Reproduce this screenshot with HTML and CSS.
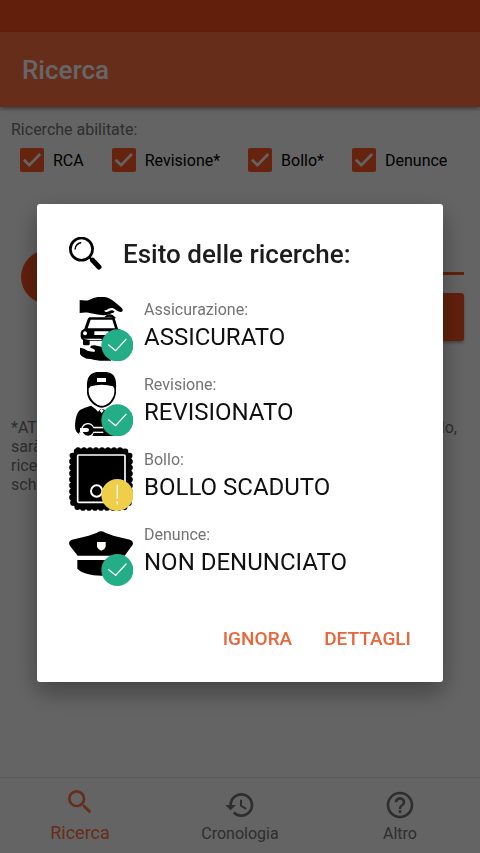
FILE: index.html
```html
<!DOCTYPE html>
<html lang="it">
<head>
<meta charset="utf-8">
<meta name="viewport" content="width=device-width, initial-scale=1">
<title>Ricerca</title>
<link rel="stylesheet" href="styles.css">
</head>
<body>
<div class="app">
  <div class="status-bar"></div>
  <header class="app-bar"><h1>Ricerca</h1></header>
  <main class="content">
    <fieldset class="filters">
      <legend>Ricerche abilitate:</legend>
      <div class="filter-row">
        <label><input type="checkbox" checked>RCA</label>
        <label><input type="checkbox" checked>Revisione*</label>
        <label><input type="checkbox" checked>Bollo*</label>
        <label><input type="checkbox" checked>Denunce</label>
      </div>
    </fieldset>
    <form class="search">
      <button type="button" class="round" aria-label="Scansiona"></button>
      <div class="search-fields">
        <input type="text" aria-label="Targa">
        <button type="button" class="submit" aria-label="Cerca"></button>
      </div>
    </form>
    <p class="note"><span class="full-line">*ATT. bollo,</span>
      sarà<br>
      ricerca<br>
      scheda</p>
  </main>
  <nav class="tabs">
    <a href="#ricerca" class="active">
      <svg viewBox="0 0 24 24"><path d="M15.5 14h-.79l-.28-.27A6.47 6.47 0 0 0 16 9.5 6.5 6.5 0 1 0 9.500 16c1.610 0 3.090-.59 4.230-1.570l.27.28v.79l5 4.990L20.490 19l-4.990-5zm-6 0C7.010 14 5 11.990 5 9.500S7.010 5 9.500 5 14 7.010 14 9.500 11.990 14 9.500 14z"/></svg>
      Ricerca</a>
    <a href="#cronologia">
      <svg viewBox="0 0 24 24"><path d="M13 3a9 9 0 0 0-9 9H1l3.890 3.890.07.14L9 12H6c0-3.870 3.130-7 7-7s7 3.130 7 7-3.130 7-7 7c-1.930 0-3.680-.79-4.940-2.060l-1.420 1.420A8.954 8.954 0 0 0 13 21a9 9 0 0 0 0-18zm-1 5v5l4.280 2.540.72-1.210-3.500-2.080V8H12z"/></svg>
      Cronologia</a>
    <a href="#altro">
      <svg viewBox="0 0 24 24"><path d="M11 18h2v-2h-2v2zm1-16C6.480 2 2 6.480 2 12s4.480 10 10 10 10-4.480 10-10S17.520 2 12 2zm0 18c-4.410 0-8-3.590-8-8s3.590-8 8-8 8 3.590 8 8-3.590 8-8 8zm0-14c-2.210 0-4 1.790-4 4h2c0-1.100.9-2 2-2s2 .9 2 2c0 2-3 1.750-3 5h2c0-2.250 3-2.500 3-5 0-2.210-1.790-4-4-4z"/></svg>
      Altro</a>
  </nav>
</div>

<div class="scrim">
  <section class="dialog" role="dialog" aria-modal="true" aria-labelledby="dialog-title">
    <header class="dialog-head">
      <svg viewBox="207 140 98 98">
        <circle cx="244" cy="176" r="33" fill="none" stroke="#000" stroke-width="8"/>
        <path d="M225 176Q227 160 242 157" fill="none" stroke="#000" stroke-width="4" stroke-linecap="round"/>
        <path d="M267 200l10 10" stroke="#000" stroke-width="7"/>
        <path d="M277 209l19 20" stroke="#000" stroke-width="15" stroke-linecap="round"/>
      </svg>
      <h2 id="dialog-title">Esito delle ricerche:</h2>
    </header>
    <dl class="results">
      <div class="result">
        <svg viewBox="27 22 192 192">
          <path d="M59 31C72 32 79 34 87 31C101 24 112 21 127 21C143 22 155 29 165 38L183 53C190 59 190 66 182 67C174 67 166 58 158 55C149 54 142 61 132 63L137 67C147 68 151 58 160 63C167 65 162 70 155 71C139 79 124 77 105 73C85 68 75 67 59 70Z"/>
          <path d="M88 83H159Q164 85 166 92L174 117Q188 120 188 132V145H177V165Q177 168 172 168H164Q160 168 160 164V153H89V163Q89 167 85 167H73Q69 167 69 163V151Q63 148 62 141V129Q63 121 73 117L82 91Q84 85 88 83ZM92 90L83 116H165L157 90Z" fill-rule="evenodd"/>
          <circle cx="75" cy="131" r="6" fill="#fff"/>
          <path d="M103 125H146V136H103ZM69 147H125V151H89Z" fill="#fff"/>
          <path d="M133 82Q143 70 158 76L168 85L162 88Q153 77 138 83Z"/>
          <path d="M60 174Q73 175 84 184L103 187Q108 180 99 177L91 174Q91 166 103 167L131 173L153 190V213H120C104 212 94 206 80 207Q64 201 60 193Z"/>
          <circle cx="172" cy="167" r="48" fill="#23ae88"/>
          <path d="M146 166l21 17 31-34" class="mark"/>
        </svg>
        <dt>Assicurazione:</dt><dd>ASSICURATO</dd>
      </div>
      <div class="result">
        <svg viewBox="27 18 192 192">
          <path d="M81 67C80 45 84 31 94 24Q108 16 126 17Q150 17 160 27C168 37 169 51 168 67V80C166 101 151 118 135 123Q125 127 115 123C98 116 82 99 81 80Z"/>
          <path d="M86 68L92 61Q125 51 159 61L163 68C166 91 151 111 134 118Q125 121 117 118C99 110 84 91 86 68Z" fill="#fff"/>
          <path d="M111 36H138V48H111Z" fill="#fff"/>
          <path d="M93 119Q106 127 114 137Q120 130 125 128Q134 130 140 136L157 119L181 130V210H70L57 204Q48 199 46 190C43 167 49 142 60 132Q73 124 93 119Z"/>
          <path d="M83 171A19 19 0 0 1 101 182H130V201H101L97 210H62L56 200L66 197L64 190A19 19 0 0 1 83 171Z" fill="#fff"/>
          <circle cx="84" cy="192" r="17"/>
          <path d="M95 187H135V197H95Z"/>
          <path d="M60 186H80Q87 186 87 192T80 198H60Z" fill="#fff"/>
          <path d="M119 134l6-6 6 6-6 7Z" fill="#fff"/>
          <circle cx="172" cy="163" r="48" fill="#23ae88"/>
          <path d="M146 162l21 17 31-34" class="mark"/>
        </svg>
        <dt>Revisione:</dt><dd>REVISIONATO</dd>
      </div>
      <div class="result">
        <svg viewBox="27 21 192 192">
          <path d="M54 30H192L210 48V186L192 204H54L36 186V48Z" stroke="#000" stroke-width="8"/>
          <path d="M54 30H192L210 48V186L192 204H54L36 186V48Z" fill="none" stroke="#000" stroke-width="17" stroke-linecap="round" stroke-dasharray="0 18"/>
          <rect x="53" y="45" width="142" height="142" rx="3" fill="none" stroke="#fff" stroke-width="5"/>
          <circle cx="110" cy="153" r="17" fill="none" stroke="#fff" stroke-width="6"/>
          <circle cx="172" cy="165" r="48" fill="#efce4a"/>
          <path d="M172 136v38M172 186v6" class="mark"/>
        </svg>
        <dt>Bollo:</dt><dd>BOLLO SCADUTO</dd>
      </div>
      <div class="result">
        <svg viewBox="27 20 192 192">
          <path d="M123 48Q129 48 136 52L160 61L210 73Q219 76 219 85Q218 90 213 95L194 121H53L32 94Q27 89 27 82Q28 76 36 73L86 61L111 52Q117 48 123 48Z"/>
          <path d="M52 134H194V160C180 175 153 181 124 181C91 180 64 173 52 160Z"/>
          <path d="M111 80H137V94Q135 102 124 106Q113 102 111 94Z" fill="#fff"/>
          <circle cx="172" cy="164" r="48" fill="#23ae88"/>
          <path d="M146 163l21 17 31-34" class="mark"/>
        </svg>
        <dt>Denunce:</dt><dd>NON DENUNCIATO</dd>
      </div>
    </dl>
    <footer class="actions">
      <button type="button">IGNORA</button>
      <button type="button">DETTAGLI</button>
    </footer>
  </section>
</div>
</body>
</html>
```
FILE: styles.css
```css
* { box-sizing: border-box; }

body {
  margin: 0;
  font-family: Roboto, "Liberation Sans", sans-serif;
  font-size: 16px;
  color: #000;
  background: #fafafa;
}

h1, h2, p, dl, dd { margin: 0; }
button, input { font: inherit; border: 0; }

.app {
  min-height: 100vh;
  display: flex;
  flex-direction: column;
}

.status-bar { height: 32px; background: #f4511e; }

.app-bar {
  height: 75px;
  padding: 0 22px;
  display: flex;
  align-items: center;
  background: #ff7043;
  box-shadow: 0 2px 4px rgba(0, 0, 0, .4);
}

.app-bar h1 {
  font-size: 26px;
  font-weight: 500;
  color: #fff;
}

.content { flex: 1; padding: 13px 16px 0 11px; }

.filters { margin: 0; padding: 0; border: 0; }

.filters legend {
  padding: 0;
  line-height: 20px;
  color: #737373;
}

.filter-row {
  display: flex;
  gap: 28px;
  padding: 8px 0 0 9px;
}

.filter-row label {
  display: flex;
  align-items: center;
  gap: 9px;
}

.filter-row input {
  appearance: none;
  width: 24px;
  height: 24px;
  margin: 0;
  border-radius: 2px;
  background: #ff5722;
}

.filter-row input:checked::before {
  content: "";
  display: block;
  height: 24px;
  background: #fafafa;
  clip-path: polygon(12% 53%, 20% 45%, 39% 64%, 80% 21%, 88% 29%, 39% 79%);
}

.search {
  display: flex;
  gap: 16px;
  padding: 78px 0 0 10px;
}

.round {
  width: 54px;
  height: 54px;
  border-radius: 50%;
  background: #f4511e;
}

.search-fields { flex: 1; }

.search-fields input {
  display: block;
  width: 100%;
  height: 25px;
  background: none;
  border-bottom: 3px solid #f4511e;
}

.submit {
  display: block;
  width: 100%;
  height: 48px;
  margin-top: 18px;
  border-radius: 3px;
  background: #f4511e;
  box-shadow: 0 2px 3px rgba(0, 0, 0, .3);
}

.note {
  padding: 77px 7px 0 0;
  line-height: 19px;
  color: #737373;
}

.full-line { display: block; text-align-last: justify; }

.tabs {
  height: 76px;
  display: flex;
  border-top: 1px solid #e4e4e4;
}

.tabs a {
  flex: 1;
  display: flex;
  flex-direction: column;
  align-items: center;
  padding-top: 11px;
  line-height: 26px;
  color: #737373;
  text-decoration: none;
}

.tabs .active {
  padding-top: 8px;
  font-size: 18px;
  line-height: 30px;
  color: #ff7043;
}

.tabs svg { width: 32px; height: 32px; fill: currentColor; }

.scrim {
  position: fixed;
  inset: 0;
  display: flex;
  align-items: center;
  justify-content: center;
  padding: 32px 37px 0;
  background: rgba(0, 0, 0, .6);
}

.dialog {
  flex: 1;
  padding: 33px 16px 19px 32px;
  border-radius: 3px;
  background: #fff;
  box-shadow: 0 10px 24px rgba(0, 0, 0, .35);
}

.dialog-head {
  display: flex;
  align-items: center;
  gap: 21px;
}

.dialog-head svg { width: 33px; height: 33px; }

.dialog-head h2 {
  font-size: 26px;
  font-weight: 500;
  line-height: 34px;
  color: #1c1c1c;
}

.results {
  display: grid;
  gap: 11px;
  padding: 26px 0 29px;
}

.result {
  display: grid;
  grid-template-columns: 64px 1fr;
  grid-template-rows: 24px 40px;
  column-gap: 11px;
}

.result svg { grid-row: span 2; width: 64px; height: 64px; }
.result dt { line-height: 26px; color: #737373; }
.result dd { font-size: 24px; line-height: 32px; color: #111; }

.mark {
  fill: none;
  stroke: #fff;
  stroke-width: 4;
  stroke-linecap: round;
  stroke-linejoin: round;
}

.actions { display: flex; justify-content: flex-end; }

.actions button {
  height: 48px;
  padding: 0 16px;
  font-size: 19px;
  font-weight: 500;
  line-height: 24px;
  color: #e8663a;
  background: none;
}
```
